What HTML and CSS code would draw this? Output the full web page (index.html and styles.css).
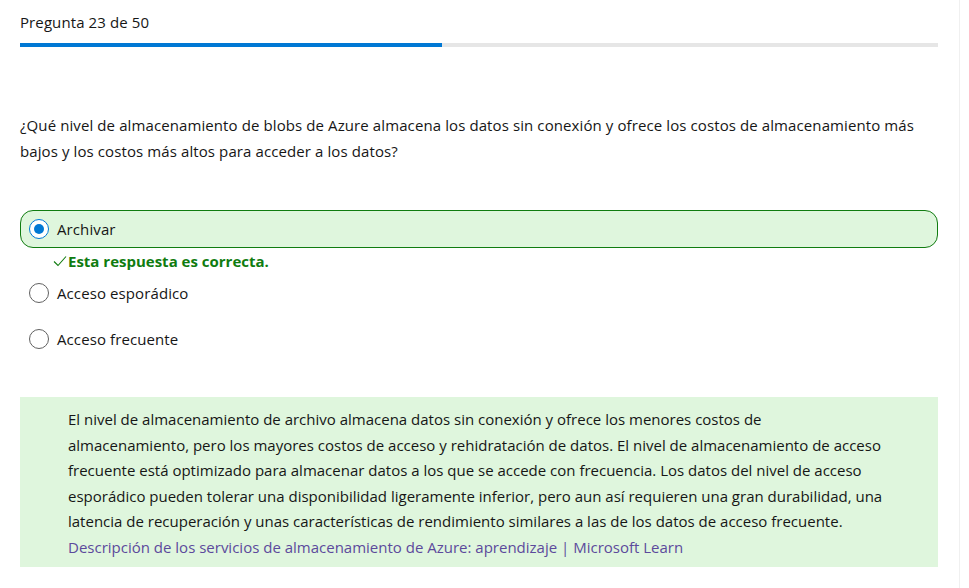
FILE: index.html
```html
<!DOCTYPE html>
<html lang="es">
<head>
<meta charset="utf-8">
<title>Pregunta 23 de 50</title>
<link rel="stylesheet" href="styles.css">
</head>
<body>
<div class="page">
  <main class="quiz">
    <div class="counter">Pregunta 23 de 50</div>
    <div class="progress"><div class="progress-fill" style="width:46%"></div></div>
    <p class="question">¿Qué nivel de almacenamiento de blobs de Azure almacena los datos sin conexión y ofrece los costos de almacenamiento más bajos y los costos más altos para acceder a los datos?</p>
    <div class="options">
      <label class="option option-correct">
        <span class="radio radio-checked"></span>
        <span class="option-text">Archivar</span>
      </label>
      <div class="feedback"><svg class="check" width="14" height="12" viewBox="0 0 14 12"><path d="M1 6.5 L5 10.5 L13 1.5" fill="none" stroke="#107c10" stroke-width="1.1"/></svg><span>Esta respuesta es correcta.</span></div>
      <label class="option">
        <span class="radio"></span>
        <span class="option-text">Acceso esporádico</span>
      </label>
      <label class="option">
        <span class="radio"></span>
        <span class="option-text">Acceso frecuente</span>
      </label>
    </div>
    <div class="explanation">
      <p>El nivel de almacenamiento de archivo almacena datos sin conexión y ofrece los menores costos de almacenamiento, pero los mayores costos de acceso y rehidratación de datos. El nivel de almacenamiento de acceso frecuente está optimizado para almacenar datos a los que se accede con frecuencia. Los datos del nivel de acceso esporádico pueden tolerar una disponibilidad ligeramente inferior, pero aun así requieren una gran durabilidad, una latencia de recuperación y unas características de rendimiento similares a las de los datos de acceso frecuente.<br><a class="link" href="#">Descripción de los servicios de almacenamiento de Azure: aprendizaje | Microsoft Learn</a></p>
    </div>
  </main>
  <div class="rail"></div>
</div>
</body>
</html>
```
FILE: styles.css
```css
* { box-sizing: border-box; }
html, body { margin: 0; padding: 0; background: #fff; }
body {
  font-family: "Open Sans", "Noto Sans", sans-serif;
  font-size: 15px;
  letter-spacing: 0.1px;
  color: #161616;
}
.page {
  display: flex;
  height: 588px;
}
.quiz {
  width: 959px;
  padding: 11px 21px 0 20px;
}
.rail {
  width: 1px;
  background: #f0f0f0;
}
.counter {
  line-height: 22px;
  height: 22px;
}
.progress {
  margin-top: 10px;
  height: 4px;
  background: #e6e6e6;
}
.progress-fill {
  height: 4px;
  background: #0078d4;
}
.question {
  margin: 65px 0 0;
  line-height: 26px;
}
.options {
  margin-top: 46px;
  display: flex;
  flex-direction: column;
}
.option {
  display: flex;
  align-items: center;
  height: 38px;
  padding-left: 8px;
  border: 1px solid transparent;
  border-radius: 13px;
}
.option + .option { margin-top: 8px; }
.option-correct {
  background: #dff6dd;
  border-color: #107c10;
}
.radio {
  width: 20px;
  height: 20px;
  border-radius: 50%;
  border: 1px solid #616161;
  background: #fff;
  flex: none;
  display: flex;
  align-items: center;
  justify-content: center;
}
.radio-checked {
  border: 1.5px solid #0078d4;
}
.radio-checked::after {
  content: "";
  width: 10px;
  height: 10px;
  border-radius: 50%;
  background: #0078d4;
}
.option-text {
  margin-left: 8px;
}
.feedback {
  display: flex;
  align-items: center;
  height: 26px;
  padding-left: 33px;
  color: #107c10;
  font-weight: 700;
  letter-spacing: 0;
}
.feedback .check { margin-right: 1px; }
.feedback + .option { margin-top: 0; }
.explanation {
  margin-top: 39px;
  background: #dff6dd;
  padding: 10px 54px 6px 48px;
}
.explanation p {
  margin: 0;
  line-height: 25.6px;
  letter-spacing: 0;
}
.link {
  color: #5c4a9c;
  text-decoration: none;
}
```
